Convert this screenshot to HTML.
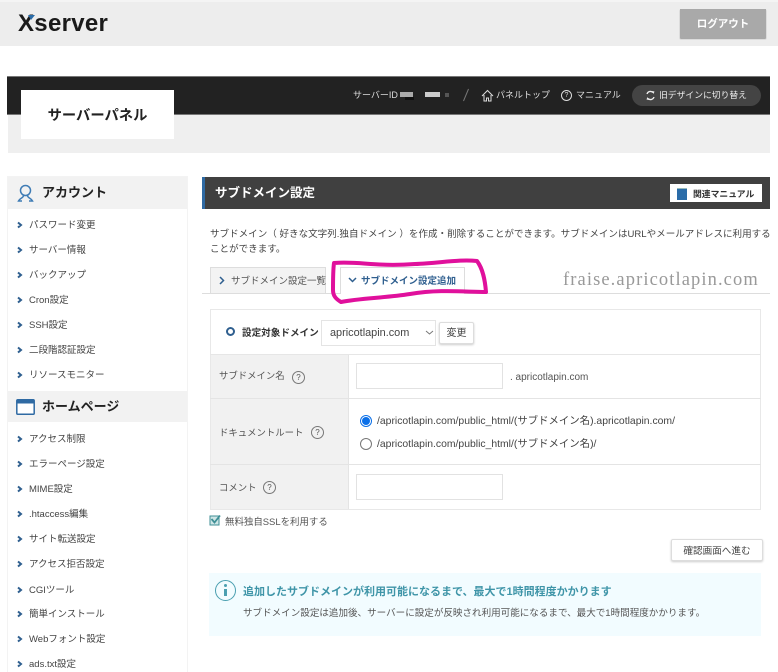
<!DOCTYPE html>
<html lang="ja"><head><meta charset="utf-8"><title>サブドメイン設定</title>
<style>
html,body{margin:0;padding:0;background:#fff}
body{width:778px;height:672px;overflow:hidden;position:relative;font-family:"Liberation Sans","Noto Sans CJK JP",sans-serif;color:#444;font-size:10px}
#w{position:absolute;left:0;top:0;width:778px;height:672px;overflow:hidden;filter:blur(.35px)}
.a{position:absolute;white-space:nowrap}
.b{position:absolute}
.m{font-size:9.500px;line-height:14px;color:#444;left:29px}
.q{position:absolute;width:11px;height:11px;border:1px solid #777;border-radius:50%;font-size:8px;line-height:11px;text-align:center;color:#555}
</style></head><body><div id="w">
<div class="b" style="left:0;top:0;width:778px;height:46px;background:#ededed"></div>
<div class="b" style="left:0;top:0;width:778px;height:2px;background:#f4f4f4"></div>
<div class="a" style="left:18px;top:9px;font-size:24px;line-height:30px;font-weight:bold;color:#1a1a1a;letter-spacing:.3px">Xserver</div>
<svg class="b" style="left:27px;top:14px" width="9" height="8"><path d="M1 1H8L4 6Z" fill="#2a6ca8"/></svg>
<div class="a" style="left:680px;top:9px;width:86px;height:29px;background:#a9a9a9;box-shadow:0 1px 1px #999;color:#fff;font-size:10.500px;font-weight:bold;line-height:31px;text-align:center">ログアウト</div>

<div class="b" style="left:7px;top:76px;width:763px;height:39px;background:#222;border-top:1px solid #777;border-bottom:1px solid #777;box-sizing:border-box"></div>
<div class="b" style="left:8px;top:115px;width:762px;height:38px;background:#efefef"></div>
<div class="a" style="left:21px;top:90px;width:153px;height:49px;background:#fff;text-align:center;font-size:14.300px;font-weight:bold;line-height:52px;color:#222">サーバーパネル</div>
<div class="a" style="left:353px;top:88px;font-size:9px;line-height:14px;color:#ddd">サーバーID</div>
<div class="b" style="left:400px;top:92px;width:13px;height:5px;background:#aaa"></div>
<div class="b" style="left:405px;top:97px;width:9px;height:3px;background:#111"></div>
<div class="b" style="left:425px;top:92px;width:15px;height:5px;background:#ccc"></div>
<div class="b" style="left:445px;top:93px;width:4px;height:4px;background:#555"></div>
<svg class="b" style="left:462px;top:88px" width="8" height="15"><path d="M6.500 1L1.500 13" stroke="#777" fill="none"/></svg>
<svg class="b" style="left:481px;top:89px" width="13" height="13"><path d="M1 7L6.500 1.500L12 7M3 6V12H5.500V9H7.500V12H10V6" stroke="#ddd" fill="none"/></svg>
<div class="a" style="left:496px;top:88px;font-size:9px;line-height:14px;color:#ddd">パネルトップ</div>
<div class="a" style="left:561px;top:90px;width:9px;height:9px;border:1px solid #ddd;border-radius:50%;font-size:7px;line-height:9px;text-align:center;color:#ddd">?</div>
<div class="a" style="left:576px;top:88px;font-size:9px;line-height:14px;color:#ddd">マニュアル</div>
<div class="a" style="left:632px;top:85px;width:129px;height:21px;border-radius:11px;background:#444"></div>
<svg class="b" style="left:645px;top:90px" width="11" height="11"><path d="M2 4A3.600 3.600 0 0 1 8 2.500M9 7A3.600 3.600 0 0 1 3 8.500" stroke="#eee" stroke-width="1.300" fill="none"/><path d="M7 1L9.500 1.500L8.500 4ZM4 10L1.500 9.500L2.500 7Z" fill="#eee"/></svg>
<div class="a" style="left:659px;top:88px;font-size:8.800px;line-height:14px;color:#eee">旧デザインに切り替え</div>

<!-- sidebar -->
<div class="b" style="left:8px;top:177px;width:179px;height:495px;background:#fff;outline:1px solid #f3f3f3"></div>
<div class="b" style="left:8px;top:177px;width:179px;height:32px;background:#f2f2f2"></div>
<svg class="b" style="left:17px;top:184px" width="17" height="19"><circle cx="8.500" cy="6.500" r="5" stroke="#3f7cb5" stroke-width="1.500" fill="none"/><path d="M6.500 11.500C6.500 14 3 14 1.500 17H5M12 17H15.500C14 14 10.500 14 10.500 11.500" stroke="#3f7cb5" stroke-width="1.500" fill="none"/></svg>
<div class="a" style="left:42px;top:184px;font-size:13px;line-height:18px;font-weight:bold;color:#222">アカウント</div>
<div class="b" style="left:8px;top:391px;width:179px;height:31px;background:#f2f2f2"></div>
<svg class="b" style="left:16px;top:399px" width="19" height="16"><rect x=".8" y=".8" width="17.400" height="14.400" rx="1" fill="#fff" stroke="#2f6aa3" stroke-width="1.500"/><rect x="1" y="1" width="17" height="3.500" fill="#2f6aa3"/></svg>
<div class="a" style="left:42px;top:398px;font-size:13px;line-height:18px;font-weight:bold;color:#222">ホームページ</div>

<div class="a m" style="top:219px">パスワード変更</div>
<div class="a m" style="top:244px">サーバー情報</div>
<div class="a m" style="top:269px">バックアップ</div>
<div class="a m" style="top:294px">Cron設定</div>
<div class="a m" style="top:319px">SSH設定</div>
<div class="a m" style="top:344px">二段階認証設定</div>
<div class="a m" style="top:369px">リソースモニター</div>
<div class="a m" style="top:433px">アクセス制限</div>
<div class="a m" style="top:458px">エラーページ設定</div>
<div class="a m" style="top:483px">MIME設定</div>
<div class="a m" style="top:508px">.htaccess編集</div>
<div class="a m" style="top:533px">サイト転送設定</div>
<div class="a m" style="top:558px">アクセス拒否設定</div>
<div class="a m" style="top:584px">CGIツール</div>
<div class="a m" style="top:608px">簡単インストール</div>
<div class="a m" style="top:633px">Webフォント設定</div>
<div class="a m" style="top:658px">ads.txt設定</div>
<svg class="b" style="left:17px;top:221px" width="7" height="450" fill="none" stroke="#2f5f8f" stroke-width="2"><path d="M1 1.500L4 4L1 6.500M1 26.500L4 29L1 31.500M1 51.500L4 54L1 56.500M1 76.500L4 79L1 81.500M1 101.500L4 104L1 106.500M1 126.500L4 129L1 131.500M1 151.500L4 154L1 156.500M1 215.500L4 218L1 220.500M1 240.500L4 243L1 245.500M1 265.500L4 268L1 270.500M1 290.500L4 293L1 295.500M1 315.500L4 318L1 320.500M1 340.500L4 343L1 345.500M1 366.500L4 369L1 371.500M1 390.500L4 393L1 395.500M1 415.500L4 418L1 420.500M1 440.500L4 443L1 445.500"/></svg>

<!-- main -->
<div class="b" style="left:202px;top:177px;width:568px;height:32px;background:#404040;border-left:3px solid #2f6aa3;box-sizing:border-box"></div>
<div class="a" style="left:215px;top:184px;font-size:12.500px;line-height:18px;font-weight:bold;color:#fff">サブドメイン設定</div>
<div class="b" style="left:670px;top:184px;width:92px;height:18px;background:#fff"></div>
<div class="b" style="left:677px;top:188px;width:10px;height:11px;background:#2a6ca8;border-top:1px solid #9bb"></div>
<div class="a" style="left:693px;top:187px;font-size:8.800px;line-height:14px;font-weight:bold;color:#333">関連マニュアル</div>

<div class="a" style="left:210px;top:227px;font-size:9.550px;line-height:15px;color:#444">サブドメイン（ 好きな文字列.独自ドメイン ）を作成・削除することができます。サブドメインはURLやメールアドレスに利用する</div>
<div class="a" style="left:210px;top:242px;font-size:9.550px;line-height:15px;color:#444">ことができます。</div>

<div class="b" style="left:202px;top:293px;width:568px;height:1px;background:#ddd"></div>
<div class="b" style="left:210px;top:267px;width:116px;height:26px;background:#f3f3f3;border:1px solid #ddd;border-bottom:0;box-sizing:border-box"></div>
<svg class="b" style="left:219px;top:276px" width="7" height="9"><path d="M1 1L4.500 4.500L1 8" stroke="#2f5f8f" stroke-width="1.500" fill="none"/></svg>
<div class="a" style="left:231px;top:275px;font-size:9.500px;line-height:14px;color:#555">サブドメイン設定一覧</div>
<div class="b" style="left:340px;top:267px;width:125px;height:27px;background:#fff;border:1px solid #ddd;border-bottom:0;box-sizing:border-box"></div>
<svg class="b" style="left:348px;top:277px" width="9" height="7"><path d="M1 1L4.500 4.500L8 1" stroke="#2f5f8f" stroke-width="1.500" fill="none"/></svg>
<div class="a" style="left:361px;top:275px;font-size:9.500px;line-height:14px;font-weight:bold;color:#2f5f8f">サブドメイン設定追加</div>
<svg class="b" style="left:325px;top:252px" width="170" height="54"><path d="M9 11C35 9 50 15 90 12C115 11 135 7 152 9C158 17 160 28 161 40C140 40 115 37 85 42C60 46 35 46 16 50C11 47 8 44 8 38C8 28 8 18 9 11Z" fill="none" stroke="#e0109c" stroke-width="4" stroke-linejoin="round"/></svg>
<div class="a" style="left:563px;top:267px;font-family:'Liberation Serif','DejaVu Serif',serif;font-size:18.500px;line-height:26px;color:#999;letter-spacing:1.100px">fraise.apricotlapin.com</div>

<!-- form table -->
<div class="b" style="left:210px;top:309px;width:551px;height:201px;border:1px solid #e8e8e8;box-sizing:border-box"></div>
<div class="b" style="left:211px;top:354px;width:138px;height:155px;background:#f1f1f1"></div>
<div class="b" style="left:348px;top:354px;width:1px;height:155px;background:#e4e4e4"></div>
<div class="b" style="left:210px;top:354px;width:551px;height:1px;background:#e6e6e6"></div>
<div class="b" style="left:210px;top:398px;width:551px;height:1px;background:#e4e4e4"></div>
<div class="b" style="left:210px;top:464px;width:551px;height:1px;background:#e4e4e4"></div>

<div class="b" style="left:226px;top:327px;width:5px;height:5px;border:2px solid #2f5f8f;border-radius:50%"></div>
<div class="a" style="left:242px;top:327px;font-size:9.600px;line-height:14px;font-weight:bold;color:#333">設定対象ドメイン</div>
<div class="a" style="left:321px;top:320px;width:115px;height:26px;box-sizing:border-box;border:1px solid #e4e4e4;padding-left:8px;font-size:10.900px;line-height:24px;color:#444">apricotlapin.com</div>
<svg class="b" style="left:425px;top:330px" width="9" height="6"><path d="M1 1L4.500 4L8 1" stroke="#777" fill="none"/></svg>
<div class="a" style="left:439px;top:322px;width:35px;height:22px;box-sizing:border-box;border:1px solid #ddd;border-radius:2px;box-shadow:0 1px 2px #ccc;background:#fff;font-size:10px;line-height:22px;text-align:center;color:#444">変更</div>

<div class="a" style="left:219px;top:369px;font-size:9.400px;line-height:14px;color:#555">サブドメイン名</div>
<div class="q" style="left:292px;top:371px">?</div>
<div class="b" style="left:356px;top:363px;width:147px;height:26px;box-sizing:border-box;border:1px solid #e2e2e2"></div>
<div class="a" style="left:510px;top:371px;font-size:10px;line-height:14px;color:#555">. apricotlapin.com</div>

<div class="a" style="left:219px;top:426px;font-size:9.400px;line-height:14px;color:#555">ドキュメントルート</div>
<div class="q" style="left:311px;top:426px">?</div>
<div class="b" style="left:360px;top:415px;width:12px;height:12px;box-sizing:border-box;border:1px solid #0a6fe8;border-radius:50%"></div>
<div class="b" style="left:362px;top:417px;width:8px;height:8px;background:#0a6fe8;border-radius:50%"></div>
<div class="a" style="left:377px;top:415px;font-size:10.400px;line-height:14px;color:#444">/apricotlapin.com/public_html/(サブドメイン名).apricotlapin.com/</div>
<div class="b" style="left:360px;top:438px;width:12px;height:12px;box-sizing:border-box;border:1px solid #777;border-radius:50%"></div>
<div class="a" style="left:377px;top:438px;font-size:10.400px;line-height:14px;color:#444">/apricotlapin.com/public_html/(サブドメイン名)/</div>

<div class="a" style="left:219px;top:481px;font-size:9.400px;line-height:14px;color:#555">コメント</div>
<div class="q" style="left:263px;top:481px">?</div>
<div class="b" style="left:356px;top:474px;width:147px;height:26px;box-sizing:border-box;border:1px solid #e2e2e2"></div>

<svg class="b" style="left:209px;top:514px" width="13" height="12"><rect x="1" y="2" width="9" height="9" fill="#cfe6e6" stroke="#3f8f96" stroke-width="1"/><path d="M2.500 5L5.500 8.500L11 1.500" fill="none" stroke="#3f8f96" stroke-width="1.800"/></svg>
<div class="a" style="left:225px;top:516px;font-size:9.450px;line-height:14px;color:#555">無料独自SSLを利用する</div>

<div class="a" style="left:671px;top:539px;width:92px;height:22px;box-sizing:border-box;border:1px solid #ddd;border-radius:2px;box-shadow:0 1px 2px #ccc;background:#fff;font-size:9.600px;line-height:24px;text-align:center;color:#444">確認画面へ進む</div>

<div class="b" style="left:209px;top:573px;width:552px;height:63px;background:#f2fcff"></div>
<div class="b" style="left:215px;top:580px;width:19px;height:19px;border:1px solid #4a9fb0;border-radius:50%"></div>
<div class="b" style="left:223.500px;top:584px;width:3px;height:3px;background:#4a9fb0;border-radius:50%"></div>
<div class="b" style="left:223.500px;top:589px;width:3px;height:7px;background:#4a9fb0"></div>
<div class="a" style="left:243px;top:584px;font-size:11px;line-height:16px;font-weight:bold;color:#3f95a8">追加したサブドメインが利用可能になるまで、最大で1時間程度かかります</div>
<div class="a" style="left:243px;top:607px;font-size:9.550px;line-height:14px;color:#555">サブドメイン設定は追加後、サーバーに設定が反映され利用可能になるまで、最大で1時間程度かかります。</div>
</div></body></html>
